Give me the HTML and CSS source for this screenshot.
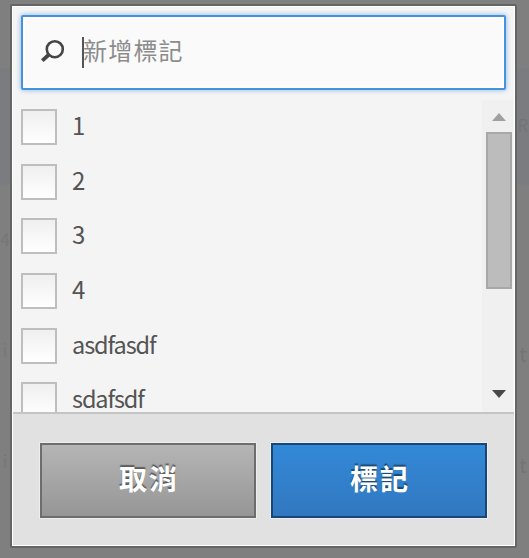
FILE: index.html
```
<!DOCTYPE html>
<html lang="zh-Hant">
<head>
<meta charset="utf-8">
<title>標記</title>
<link rel="stylesheet" href="styles.css">
</head>
<body>
<div class="backdrop left" aria-hidden="true"><span>4</span><span>i</span><span>i</span></div>
<main class="dialog">
  <div class="search">
    <svg class="search-icon" viewBox="0 0 26 26" aria-hidden="true"><circle cx="14.8" cy="10.2" r="8"/><path class="handle" d="M9 15.5 L2.3 21.7"/></svg>
    <span class="caret"></span><span class="placeholder">新增標記</span>
  </div>
  <div class="list">
    <div class="options">
      <label class="option"><span class="box"></span><span class="name">1</span></label>
      <label class="option"><span class="box"></span><span class="name">2</span></label>
      <label class="option"><span class="box"></span><span class="name">3</span></label>
      <label class="option"><span class="box"></span><span class="name">4</span></label>
      <label class="option"><span class="box"></span><span class="name word">asdfasdf</span></label>
      <label class="option"><span class="box"></span><span class="name word">sdafsdf</span></label>
    </div>
    <div class="scrollbar">
      <span class="arrow up"></span>
      <span class="thumb"></span>
      <span class="arrow down"></span>
    </div>
  </div>
  <div class="actions">
    <button class="button cancel">取消</button>
    <button class="button primary">標記</button>
  </div>
</main>
<div class="backdrop right" aria-hidden="true"><span>R</span><span>t</span><span>t</span></div>
</body>
</html>
```
FILE: styles.css
```
* { box-sizing: border-box; }
body {
  margin: 0;
  width: 529px;
  height: 558px;
  padding-top: 4px;
  display: flex;
  align-items: flex-start;
  overflow: hidden;
  background: linear-gradient(#7f7f7f 0 68px, #7a7c7f 69px 184px, #7f7f7f 185px);
  font-family: "Noto Sans CJK TC", "Open Sans", sans-serif;
}
.backdrop {
  flex: none;
  display: flex;
  flex-direction: column;
  font-size: 20px;
  line-height: 30px;
  color: #747474;
}
.backdrop span { height: 111px; }
.left {
  width: 10px;
  padding-top: 220px;
  align-items: center;
  color: #73777c;
}
.left span { font-size: 17px; }
.right { width: 12px; align-items: center; padding-top: 106px; }
.right span:first-child { height: 229px; font-size: 17px; }
.dialog {
  flex: none;
  width: 507px;
  height: 544px;
  display: flex;
  flex-direction: column;
  border: 2px solid #656565;
  border-radius: 2px;
  background: #f4f4f4;
  box-shadow: inset 0 0 0 1px #fff;
}
.search {
  flex: none;
  height: 75px;
  margin: 9px 9px 10px;
  padding-left: 17px;
  display: flex;
  align-items: center;
  border: 2px solid #4693db;
  border-radius: 2px;
  background: #fafafa;
  box-shadow: 0 0 5px #7db5e8, inset 0 0 0 2px #fff;
}
.search-icon {
  width: 26px;
  height: 26px;
  margin-top: -1px;
  fill: none;
  stroke: #454545;
  stroke-width: 2.6;
}
.search-icon .handle { stroke-width: 3.8; }
.caret {
  width: 2px;
  height: 31px;
  margin-left: 16px;
  background: #555;
}
.placeholder {
  margin: -5px 0 0 -1px;
  font-size: 24px;
  letter-spacing: 1.2px;
  line-height: 34px;
  color: #8c8c8c;
}
.list {
  flex: none;
  height: 312px;
  margin: 0 2px 0 1px;
  display: flex;
  overflow: hidden;
}
.options { flex: 1; padding: 9px 0 0 8px; }
.option {
  height: 54.7px;
  display: flex;
  align-items: flex-start;
}
.box {
  width: 36px;
  height: 36px;
  flex: none;
  border: 2px solid #bebebe;
  background: linear-gradient(#efefef, #fff);
}
.name {
  margin: -2px 0 0 15px;
  font-size: 24px;
  line-height: 36px;
  color: #545454;
}
.word { font-size: 23.5px; letter-spacing: -1.1px; }
.scrollbar {
  width: 31px;
  padding: 13px 1px 14px 3px;
  display: flex;
  flex-direction: column;
  align-items: center;
  background: #f0f0f0;
}
.arrow {
  border: 7px solid transparent;
  border-top-width: 0;
  border-bottom: 8px solid #a0a0a0;
}
.thumb {
  width: 26px;
  height: 157px;
  margin-top: 11px;
  border: 2px solid #a8a8a8;
  background: #bcbcbc;
}
.down {
  margin-top: auto;
  border-bottom-width: 0;
  border-top: 8px solid #484848;
}
.actions {
  flex: 1;
  padding: 29px 0 0 27px;
  margin: 0 1px 1px;
  display: flex;
  gap: 15px;
  border-top: 2px solid #c4c4c4;
  background: #e1e1e1;
}
.button {
  width: 216px;
  height: 75px;
  padding: 0 0 6px 2px;
  border: 2px solid #6d6d6d;
  font: 700 28px/40px "Noto Sans CJK TC", sans-serif;
  letter-spacing: 2px;
  color: #fff;
  background: linear-gradient(#b5b5b5, #969696);
  box-shadow: 0 0 0 1px #ededed;
  text-shadow: 0 -2px 1px rgba(0, 0, 0, .45);
}
.primary {
  border-color: #174678;
  background: linear-gradient(#3289d7, #3278c0);
}
```
